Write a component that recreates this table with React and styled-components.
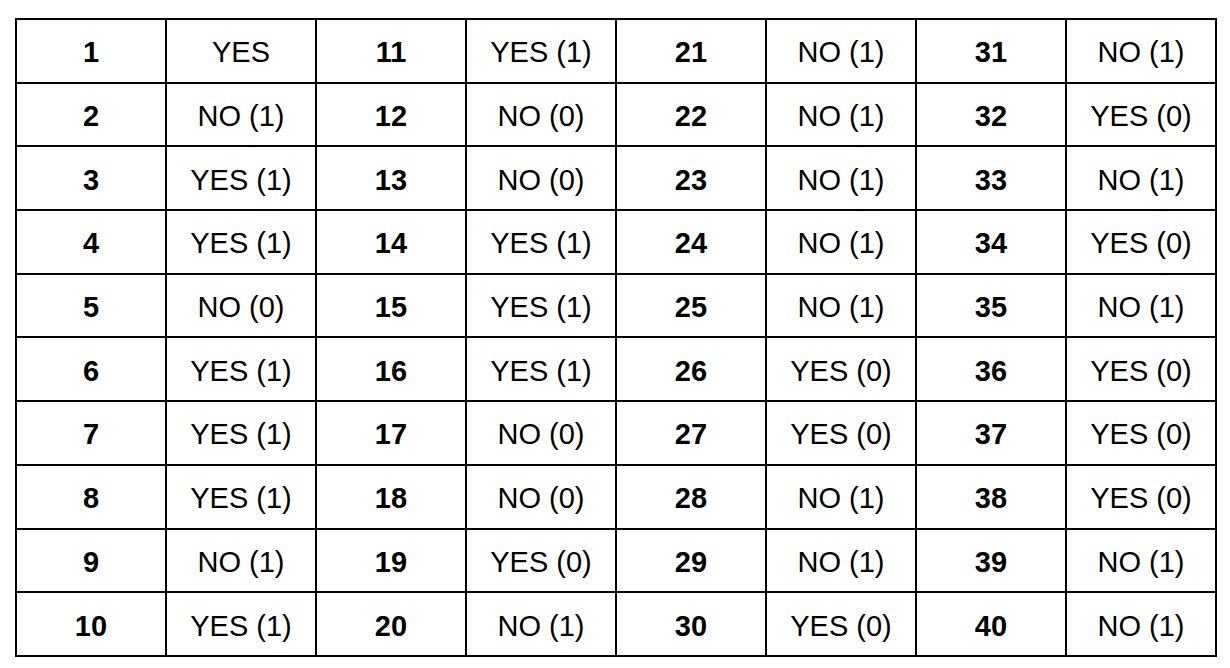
import React from "react";
import styled, { createGlobalStyle } from "styled-components";

const GlobalStyle = createGlobalStyle`
  html, body {
    margin: 0;
    background: #fff;
  }
`;

const Page = styled.div`
  padding: 18px 0 0 15px;
`;

const Table = styled.table`
  border-collapse: collapse;
  width: 1202px;
  table-layout: fixed;
  font-family: "Liberation Sans", Arial, sans-serif;
  color: #000;
`;

const Row = styled.tr`
  height: 63.7px;
`;

const Cell = styled.td`
  border: 2px solid #000;
  text-align: center;
  vertical-align: middle;
  padding: 4px 0 0;
  line-height: 1;
  font-size: 29px;
  font-weight: ${({ $bold }) => ($bold ? 700 : 400)};
`;

const answers = [
  "YES", "NO (1)", "YES (1)", "YES (1)", "NO (0)", "YES (1)", "YES (1)", "YES (1)", "NO (1)", "YES (1)",
  "YES (1)", "NO (0)", "NO (0)", "YES (1)", "YES (1)", "YES (1)", "NO (0)", "NO (0)", "YES (0)", "NO (1)",
  "NO (1)", "NO (1)", "NO (1)", "NO (1)", "NO (1)", "YES (0)", "YES (0)", "NO (1)", "NO (1)", "YES (0)",
  "NO (1)", "YES (0)", "NO (1)", "YES (0)", "NO (1)", "YES (0)", "YES (0)", "YES (0)", "NO (1)", "NO (1)",
];

export default function App() {
  const rows = Array.from({ length: 10 }, (_, r) => r);
  return (
    <>
      <GlobalStyle />
      <Page>
        <Table>
          <tbody>
            {rows.map((r) => (
              <Row key={r}>
                {[0, 1, 2, 3].map((c) => {
                  const n = c * 10 + r;
                  return (
                    <React.Fragment key={c}>
                      <Cell $bold>{n + 1}</Cell>
                      <Cell>{answers[n]}</Cell>
                    </React.Fragment>
                  );
                })}
              </Row>
            ))}
          </tbody>
        </Table>
      </Page>
    </>
  );
}
